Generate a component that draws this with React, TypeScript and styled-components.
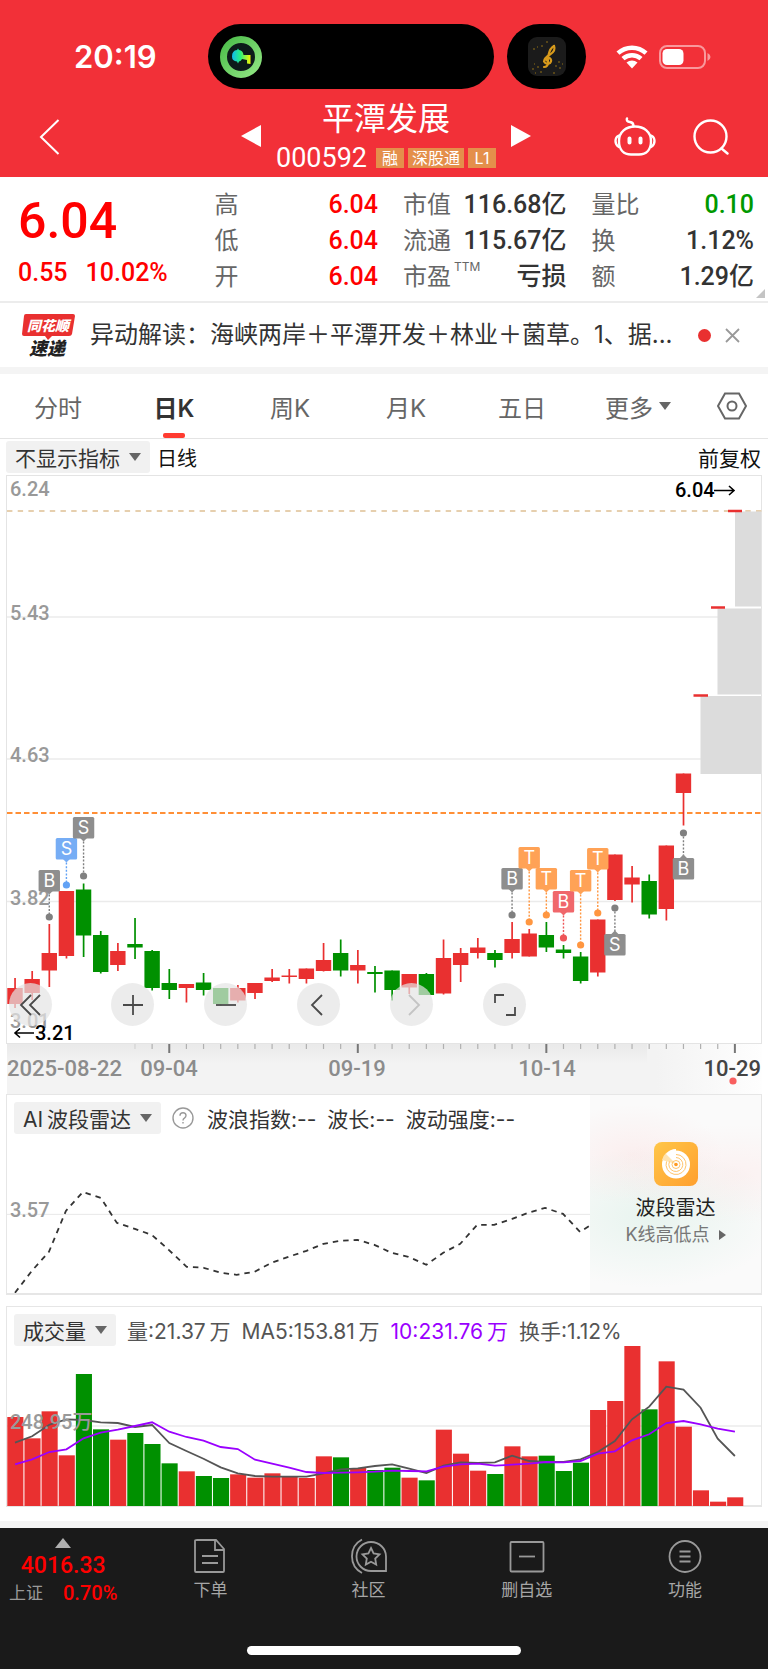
import React from 'react';
import styled, { createGlobalStyle } from 'styled-components';

const RED = '#e93030';
const GREEN = '#009000';
const SANS = 'Inter, "Noto Sans CJK SC", sans-serif';
const NUM = 'Roboto, "Noto Sans CJK SC", sans-serif';

const GlobalStyle = createGlobalStyle`
  * { box-sizing: border-box; }
  body { margin: 0; background: #fff; font-family: ${SANS}; color: #333; }
  button { border: 0; padding: 0; margin: 0; background: none; font: inherit; color: inherit; cursor: pointer; }
  a { color: inherit; text-decoration: none; }
  svg { display: block; }
`;

const Page = styled.div`
  display: flex;
  flex-direction: column;
  min-height: 100vh;
`;

/* ---------- header ---------- */
const Header = styled.header`
  background: #f23038;
  color: #fff;
  height: 177px;
  display: flex;
  flex-direction: column;
`;
const StatusBar = styled.div`
  display: grid;
  grid-template-columns: 208px 286px 79px 1fr;
  padding-top: 24px;
  align-items: center;
`;
const Clock = styled.time`
  font-size: 31px;
  font-weight: 600;
  line-height: 65px;
  padding-left: 74px;
`;
const Pill = styled.div<{ $center?: boolean }>`
  height: 65px;
  border-radius: 33px;
  background: #000;
  display: flex;
  align-items: center;
  justify-content: ${p => (p.$center ? 'center' : 'flex-start')};
  padding-left: ${p => (p.$center ? 0 : 12)}px;
  margin-left: ${p => (p.$center ? 13 : 0)}px;
  margin-right: ${p => (p.$center ? -13 : 0)}px;
`;
const Signals = styled.div`
  display: flex;
  align-items: center;
  gap: 11px;
  padding-left: 43px;
`;
const TitleBar = styled.div`
  flex: 1;
  display: grid;
  grid-template-columns: 1fr 290px 1fr;
  align-items: center;
  padding-left: 4px;
`;
const TitleSide = styled.div<{ $end?: boolean }>`
  display: flex;
  align-items: center;
  gap: 37px;
  justify-content: ${p => (p.$end ? 'flex-end' : 'flex-start')};
  padding: 7px 39px 0 35px;
`;
const TitleCenter = styled.div`
  display: flex;
  align-items: center;
  justify-content: space-between;
`;
const StepButton = styled.button`
  padding-top: 5px;
`;
const TitleText = styled.div`
  display: flex;
  flex-direction: column;
  align-items: center;
  padding-top: 6px;
`;
const StockName = styled.h1`
  margin: 0;
  font-size: 32px;
  font-weight: 400;
  line-height: 44px;
`;
const CodeLine = styled.div`
  display: flex;
  align-items: center;
  gap: 4px;
`;
const Code = styled.span`
  font-family: ${NUM};
  font-size: 27px;
  line-height: 34px;
  margin-right: 5px;
`;
const Tag = styled.span`
  background: #e48f4b;
  font-size: 16px;
  line-height: 20px;
  height: 20px;
  min-width: 28px;
  padding: 0 4px;
  text-align: center;
`;

/* ---------- quote ---------- */
const Quote = styled.section`
  display: grid;
  grid-template-columns: 171fr 163fr 163fr 162fr;
  column-gap: 25px;
  padding: 10px 14px 7px 18px;
  border-bottom: 2px solid #ececec;
  position: relative;
  height: 126px;
`;
const PriceBlock = styled.div`
  color: #ff0000;
  font-family: ${NUM};
  font-weight: 500;
`;
const Price = styled.div`
  font-size: 50px;
  line-height: 68px;
`;
const Change = styled.div`
  display: flex;
  gap: 18px;
  font-size: 25px;
  line-height: 36px;
`;
const Facts = styled.dl`
  margin: 0;
`;
const Fact = styled.div`
  display: flex;
  justify-content: space-between;
  height: 36px;
  line-height: 36px;
`;
const FactName = styled.dt`
  font-size: 24px;
  color: #666;
  display: flex;
`;
const FactValue = styled.dd<{ $color?: string }>`
  margin: 0;
  font-family: ${NUM};
  font-size: 25px;
  font-weight: 500;
  color: ${p => p.$color || '#333'};
`;
const Sup = styled.span`
  font-size: 12px;
  line-height: 14px;
  padding: 1px 0 0 3px;
`;
const Corner = styled.span`
  position: absolute;
  right: 3px;
  bottom: 3px;
  border-left: 9px solid transparent;
  border-bottom: 9px solid #c4c4c4;
`;

/* ---------- news ---------- */
const News = styled.section`
  display: flex;
  align-items: center;
  height: 64px;
  padding: 0 28px 0 22px;
`;
const NewsLogo = styled.svg`
  flex: none;
  overflow: visible;
`;
const NewsLink = styled.a`
  flex: 1;
  min-width: 0;
  margin-left: 15px;
  font-size: 24px;
  line-height: 36px;
  color: #333;
  white-space: nowrap;
`;
const RedDot = styled.span`
  width: 13px;
  height: 13px;
  border-radius: 50%;
  background: ${RED};
  margin: 0 14px 0 16px;
`;
const Band = styled.div`
  height: 7px;
  background: #f4f4f4;
`;

/* ---------- tabs ---------- */
const Tabs = styled.nav`
  display: flex;
  height: 65px;
  border-bottom: 1px solid #e4e4e4;
`;
const Tab = styled.button<{ $on?: boolean; $small?: boolean }>`
  flex: ${p => (p.$small ? 72 : 116)} 1 0;
  display: flex;
  align-items: center;
  justify-content: center;
  gap: 6px;
  font-size: 24px;
  font-weight: ${p => (p.$on ? 600 : 400)};
  color: ${p => (p.$on ? '#333' : '#666')};
  position: relative;
`;
const TabMark = styled.span`
  position: absolute;
  bottom: 0;
  left: calc(50% - 11px);
  width: 22px;
  height: 5px;
  border-radius: 2px;
  background: #ff3b30;
`;
const Triangle = styled.span`
  border: 6px solid transparent;
  border-top: 8px solid #666;
  border-bottom: 0;
`;

/* ---------- chart panels ---------- */
const Toolbar = styled.div`
  display: flex;
  align-items: center;
  height: 36px;
  padding: 0 7px 0 6px;
  font-size: 21px;
  color: #111;
`;
const Picker = styled.button`
  display: flex;
  align-items: center;
  gap: 9px;
  height: 32px;
  padding: 0 9px;
  border-radius: 3px;
  background: #f1f1f1;
  color: #333;
  font-size: 21px;
  white-space: nowrap;
`;
const LineKind = styled.span`
  flex: 1;
  padding-left: 7px;
  font-size: 20px;
`;
const ChartBox = styled.section`
  position: relative;
  margin: 0 6px;
`;
const ChartSvg = styled.svg`
  width: 100%;
  height: auto;
  overflow: visible;
`;
const Controls = styled.div`
  position: absolute;
  left: 3px;
  top: 508px;
  display: flex;
  gap: 50px;
`;
const RoundButton = styled.button<{ $faded?: boolean }>`
  width: 43px;
  height: 43px;
  border-radius: 50%;
  background: rgba(228, 228, 228, 0.7);
  color: ${p => (p.$faded ? '#c4c4c4' : '#4a4a4a')};
  display: flex;
  align-items: center;
  justify-content: center;
  &:first-child {
    margin-right: 9px;
  }
`;
const Panel = styled.section<{ $gap?: boolean }>`
  margin: 0 6px;
  margin-top: ${p => (p.$gap ? 11 : 0)}px;
  border: 1px solid #e6e6e6;
  border-width: 1px 1px 2px;
  height: 201px;
  display: flex;
`;
const PanelMain = styled.div`
  flex: 1;
  min-width: 0;
`;
const PanelClip = styled(PanelMain)`
  overflow: hidden;
`;
const PanelHead = styled.div`
  display: flex;
  align-items: center;
  height: 46px;
  padding-left: 7px;
  gap: 11px;
  font-size: 21px;
  color: #333;
  white-space: nowrap;
`;
const Help = styled.svg`
  margin-right: 2px;
`;
const Stat = styled.span<{ $color?: string }>`
  color: ${p => p.$color || '#555'};
`;
const Promo = styled.a`
  width: 171px;
  display: flex;
  flex-direction: column;
  align-items: center;
  padding-top: 47px;
  background:
    radial-gradient(ellipse 90px 50px at 25% 30%, rgba(255, 205, 205, 0.25), transparent),
    radial-gradient(ellipse 120px 50px at 85% 40%, rgba(255, 215, 215, 0.25), transparent),
    radial-gradient(ellipse 130px 70px at 35% 62%, rgba(205, 235, 222, 0.4), transparent),
    #fafafa;
`;
const PromoTitle = styled.span`
  font-size: 20px;
  line-height: 28px;
  margin-top: 8px;
  color: #222;
`;
const PromoSub = styled.span`
  display: flex;
  align-items: center;
  gap: 9px;
  font-size: 18px;
  line-height: 26px;
  color: #777;
`;
const RightTriangle = styled.span`
  border: 5px solid transparent;
  border-left: 7px solid #666;
  border-right: 0;
`;

/* ---------- bottom bar ---------- */
const Footer = styled.footer`
  flex: 1;
  margin-top: 14px;
  border-top: 7px solid #f4f4f4;
  background: #1a1a1a;
  display: flex;
  flex-direction: column;
  justify-content: space-between;
  align-items: center;
  padding-bottom: 14px;
`;
const FootRow = styled.nav`
  display: flex;
  align-self: stretch;
  padding: 10px 4px 0 0;
`;
const IndexBox = styled.button`
  flex: 127 1 0;
  display: flex;
  flex-direction: column;
  align-items: center;
  padding-right: 5px;
  font-family: ${NUM};
  font-weight: 500;
  color: #ff0000;
`;
const IndexValue = styled.span`
  font-size: 23px;
  line-height: 24px;
  margin-top: 6px;
`;
const IndexLine = styled.span`
  display: flex;
  gap: 20px;
  font-size: 20px;
  line-height: 30px;
`;
const IndexName = styled.span`
  font-size: 17px;
  font-weight: 400;
  color: #999;
`;
const FootItem = styled.button`
  flex: 159 1 0;
  display: flex;
  flex-direction: column;
  align-items: center;
  gap: 3px;
  font-size: 17px;
  line-height: 26px;
  color: #a6a6a6;
`;
const HomeBar = styled.div`
  width: 274px;
  height: 9px;
  border-radius: 5px;
  background: #fff;
`;

/* ---------- data ---------- */
const cx = (i: number) => 15 + 17.14 * i;

/* body top, body bottom, wick top, wick bottom */
type Candle = ['R' | 'G', number, number, number, number];
const candles: Candle[] = [
  ['R', 988, 1004, 978, 1008], ['R', 979, 993, 971, 1000], ['R', 953, 970.5, 924, 987], ['R', 891, 956, 891, 958.5],
  ['G', 889.5, 935.5, 883.5, 957], ['G', 935, 972, 931, 973.5], ['R', 951, 965, 943, 971], ['G', 944, 947.5, 918, 959],
  ['G', 951, 988, 950, 990.5], ['G', 983, 990, 969, 999], ['R', 984, 988, 984, 1002.5], ['G', 982.5, 990, 973, 995.5],
  ['G', 988, 1004, 988, 1006], ['R', 988, 1000.5, 985, 1002.5], ['R', 983, 993, 983, 999], ['R', 977.5, 981, 969, 982],
  ['R', 975.5, 977, 969, 983.5], ['R', 968.5, 979, 968.5, 983.5], ['R', 960, 971, 943, 971.5], ['G', 953, 970.5, 939.5, 976.5],
  ['R', 965, 970.5, 950, 983.5], ['G', 972, 974, 966, 992.5], ['G', 970.5, 990, 970.5, 1000.5], ['R', 974, 987.5, 974, 994],
  ['G', 974, 995, 973, 995], ['R', 958, 993.5, 939.5, 994.5], ['R', 953, 965, 948, 982], ['R', 947.5, 953, 938, 958.5],
  ['G', 953, 960, 950, 967.5], ['R', 939, 953, 922, 958.5], ['R', 933.5, 956.5, 929, 956.5], ['G', 935, 947.5, 922, 952],
  ['G', 949.5, 953, 945, 958.5], ['G', 956.5, 981, 952, 983.5], ['R', 919.5, 972.5, 919.5, 976.5], ['R', 854.5, 900, 854.5, 901],
  ['R', 877.5, 884.5, 866, 902.5], ['G', 881, 914.5, 874.5, 918.5], ['R', 845.5, 909, 845.5, 920.5], ['R', 773.5, 793, 773.5, 825.5],
];

/* candle index, letter, colour, box top, dot y */
type Marker = [number, string, string, number, number];
const markers: Marker[] = [
  [2, 'B', '#8e8e8e', 870, 917], [3, 'S', '#76adf5', 838, 885], [4, 'S', '#8e8e8e', 817, 876],
  [29, 'B', '#8e8e8e', 868, 915], [30, 'T', '#ffa256', 847, 922], [31, 'T', '#ffa256', 868, 915],
  [32, 'B', '#f0676b', 891, 938], [33, 'T', '#ffa256', 870, 945], [34, 'T', '#ffa256', 848, 913],
  [35, 'S', '#8e8e8e', 934, 908], [39, 'B', '#8e8e8e', 858, 833],
];
const dotColor: Record<string, string> = {
  '#8e8e8e': '#808080', '#76adf5': '#62a2f5', '#ffa256': '#ff9640', '#f0676b': '#ee5558',
};

const barKinds = 'RRRRGGRGGGRGGRRRRRRGRGGRGRRRGRRGGGRRRGRRRRR';
const barTops = [
  351, 415, 334, 466, 222, 388, 419, 399, 432, 490, 514, 528, 534, 523, 533, 520, 531, 534, 469, 472, 504, 510, 503, 533,
  541, 389, 461, 512, 522, 439, 469, 467, 513, 488, 330, 303, 138, 328, 184, 380, 571, 605, 592,
];
const ma5 = [
  428, 409, 374, 358, 360, 367, 369, 381, 375, 429, 453, 476, 502, 520, 528, 530, 530, 530, 520, 508, 505, 498, 493, 506,
  519, 497, 487, 489, 487, 467, 483, 486, 486, 478, 456, 423, 358, 320, 260, 269, 323, 416, 468,
];
const ma10 = [
  493, 478, 456, 448, 415, 398, 389, 378, 367, 395, 411, 422, 441, 447, 479, 491, 503, 516, 519, 518, 517, 515, 512, 513,
  514, 500, 493, 491, 497, 494, 491, 486, 487, 483, 461, 454, 421, 403, 369, 363, 373, 386, 395,
];
const line = (v: number[]) => v.map((y, i) => `${cx(i).toFixed(1)},${(y / 3).toFixed(1)}`).join(' ');

const wave =
  '15,213 32,191 49,172 66,131 83,112 101,118 117,143 135,149 152,155 169,170 187,187 204,188 221,193 237,195 255,192 272,183 289,177 307,171 324,164 341,161 358,160 375,165 392,173 409,177 427,185 444,173 461,164 478,145 495,145 513,139 529,133 546,128 564,134 581,152 598,141';

/* ---------- drawings ---------- */
const Axis = ({ y, children, x = 10 }: { y: number; children: React.ReactNode; x?: number }) => (
  <text x={x} y={y} fontFamily={NUM} fontSize="20" fontWeight="500" fill="#999">{children}</text>
);

const KChart = () => (
  <ChartSvg viewBox="6 475 756 619" role="img" aria-label="日K">
    <defs>
      <linearGradient id="axisfade" x1="0" x2="1" y1="0" y2="0">
        <stop offset="0.86" stopColor="#f3f3f3" />
        <stop offset="1" stopColor="#fefefe" />
      </linearGradient>
      <linearGradient id="axisshade" x1="0" x2="0" y1="0" y2="1">
        <stop offset="0" stopColor="#000" stopOpacity="0.04" />
        <stop offset="1" stopColor="#000" stopOpacity="0" />
      </linearGradient>
    </defs>
    {[617, 759, 901.5].map(y => <line key={y} x1="6" x2="762" y1={y} y2={y} stroke="#ebebeb" strokeWidth="1.5" />)}
    <rect x="6.5" y="475.5" width="755" height="568" fill="none" stroke="#e4e4e4" />
    <path d="M7 511H762" stroke="#e6cfae" strokeWidth="2" strokeDasharray="5.4 5.3" />
    <path d="M7 813H762" stroke="#ff8f36" strokeWidth="2" strokeDasharray="5.5 3" />
    <g fill="#dcdcdc">
      <rect x="735" y="511.5" width="26" height="95" />
      <rect x="717.5" y="608.5" width="43.5" height="86" />
      <rect x="700.5" y="696" width="60.5" height="78" />
    </g>
    <g stroke={RED} strokeWidth="2.4">
      <path d="M728 511H742M711 607.5H725M693.5 695.5H708" />
    </g>
    <Axis y={496}>6.24</Axis>
    <Axis y={620}>5.43</Axis>
    <Axis y={762}>4.63</Axis>
    <Axis y={905}>3.82</Axis>
    <Axis y={1028}>3.01</Axis>
    {candles.map(([k, t, b, h, l], i) => (
      <g key={i} fill={k === 'R' ? RED : GREEN}>
        <rect x={cx(i) - 0.8} y={h} width="1.7" height={l - h} />
        <rect x={Math.max(7, cx(i) - 7.7)} y={t} width="15.4" height={b - t} />
      </g>
    ))}
    {markers.map(([i, ch, c, top, dot]) => {
      const below = dot < top;
      const x = cx(i);
      return (
        <g key={i} fill={c}>
          <path d={below ? `M${x} ${dot}V${top}` : `M${x} ${top + 21}V${dot}`} stroke={dotColor[c]} strokeWidth="1.4" strokeDasharray="2 1.6" />
          <circle cx={x} cy={dot} r="3.6" fill={dotColor[c]} />
          <rect x={x - 10.7} y={top} width="21.4" height="21.4" rx="1.5" />
          <path d={below ? `M${x - 3.5} ${top}l3.5 -3.5l3.5 3.5z` : `M${x - 3.5} ${top + 21}l3.5 3.5l3.5 -3.5z`} />
          <text x={x} y={top + 17} fill="#fff" textAnchor="middle" fontFamily={SANS} fontSize="18">{ch}</text>
        </g>
      );
    })}
    <g fill="#000" fontFamily={NUM} fontSize="20" fontWeight="500">
      <text x="675" y="497">6.04</text>
      <text x="35" y="1040">3.21</text>
    </g>
    <path d="M714 490.5H734M729 486l5 4.5l-5 4.5M34 1033H15M20 1028.5l-5 4.5l5 4.5" fill="none" stroke="#000" strokeWidth="1.6" />
    <rect x="7" y="1044" width="755" height="50" fill="url(#axisfade)" />
    <rect x="7" y="1044" width="640" height="20" fill="url(#axisshade)" />
    {Array.from({ length: 36 }, (_, k) => k + 7).map(i => {
      const major = (i - 9) % 11 === 0;
      return (
        <path key={i} d={`M${cx(i)} 1044v${major ? 9 : 5}`} stroke={major ? '#777' : '#b0b0b0'} strokeOpacity={i === 7 ? 0.4 : 1} strokeWidth={major ? 2 : 1.2} />
      );
    })}
    <g fontFamily={NUM} fontSize="22" fontWeight="500" fill="#8c8c8c">
      <text x="7" y="1076">2025-08-22</text>
      <text x="169" y="1076" textAnchor="middle">09-04</text>
      <text x="357" y="1076" textAnchor="middle">09-19</text>
      <text x="547" y="1076" textAnchor="middle">10-14</text>
      <text x="761" y="1076" textAnchor="end" fill="#444">10-29</text>
    </g>
    <circle cx="733" cy="1081" r="3.6" fill="#f95f5f" />
  </ChartSvg>
);

const VolumeChart = () => (
  <ChartSvg viewBox="7 53 754 153" role="img" aria-label="成交量">
    <line x1="7" x2="761" y1="126" y2="126" stroke="#ebebeb" strokeWidth="1.5" />
    {barTops.map((t, i) => (
      <rect key={i} x={cx(i) - 7.7} y={t / 3} width="16.1" height={206 - t / 3} fill={barKinds[i] === 'R' ? RED : GREEN} />
    ))}
    <polyline points={line(ma5)} fill="none" stroke="#555" strokeWidth="1.8" />
    <polyline points={line(ma10)} fill="none" stroke="#9a00ff" strokeWidth="1.8" />
    <Axis y={129}>248.95万</Axis>
  </ChartSvg>
);

const WaveChart = () => (
  <ChartSvg viewBox="7 61 584 153" role="img" aria-label="AI波段雷达">
    <line x1="7" x2="591" y1="134.5" y2="134.5" stroke="#e8e8e8" />
    <polyline points={wave} fill="none" stroke="#333" strokeWidth="1.8" strokeDasharray="5.5 5" />
    <Axis y={137}>3.57</Axis>
  </ChartSvg>
);

const Glyph = ({ d }: { d: string }) => (
  <svg width="24" height="24" viewBox="0 0 24 24" fill="none" stroke="currentColor" strokeWidth="1.8"><path d={d} /></svg>
);
const controls: [string, string, boolean?][] = [
  ['最前', 'M12 2L2 12l10 10M21 2L11 12l10 10'],
  ['放大', 'M12 2v20M2 12h20'],
  ['缩小', 'M2 12h20'],
  ['向左', 'M15 2L5 12l10 10'],
  ['向右', 'M9 2l10 10l-10 10', true],
  ['全屏', 'M2 10V2h9M22 14v8h-9'],
];

export default function App() {
  return (
    <Page>
      <GlobalStyle />
      <Header>
        <StatusBar>
          <Clock>20:19</Clock>
          <Pill>
            <svg width="42" height="42" viewBox="0 0 42 42">
              <defs>
                <linearGradient id="ring" x1="0" x2="1" y1="0" y2="1"><stop offset="0" stopColor="#4cbc4a" /><stop offset="1" stopColor="#90e682" /></linearGradient>
                <linearGradient id="talk" x1="0" x2="1"><stop offset="0" stopColor="#10b8f0" /><stop offset=".45" stopColor="#28f080" /><stop offset="1" stopColor="#f8f400" /></linearGradient>
              </defs>
              <circle cx="21" cy="21" r="17.5" fill="#0d1a1a" stroke="url(#ring)" strokeWidth="7" />
              <path d="M12 20.500q0-6 5-6.500l1-1.500l1 1.500q4 .5 4.500 5h7v9l-3.500-.5v-3.500l-5-1q-1 2-3 2.500l-1 2l-1-2q-5-.5-5-5z" fill="url(#talk)" />
            </svg>
          </Pill>
          <Pill $center>
            <svg width="38" height="39" viewBox="0 0 38 39">
              <rect width="38" height="39" rx="9" fill="#1b1b1b" />
              <g fill="none" stroke="#d79a1c" strokeLinecap="round">
                <path d="M26 9q-4 2-5.500 9q-1 4-.5 7q0 5-4 5" strokeWidth="2.2" />
                <path d="M26 9q2 5-4 8.500q-6 3.500-6 7q2 3.500 6 1.500q2.500-3-.5-5q-3 0-3 2.500" strokeWidth="2.2" />
              </g>
              <path d="M4 32h2M7 36h1M9 30h2M12 35h2M25 36h2M31 31h2M6 27h1M30 25h2M34 27h1M27 29h2M13 9h2M5 12h2M18 5h2M9 10h1" stroke="#6b5418" strokeWidth="1.5" />
            </svg>
          </Pill>
          <Signals>
            <svg width="32" height="24" viewBox="0 0 32 24" fill="#fff">
              <path d="M16 .5Q25 .5 31.500 6.500L28.500 9.800Q23 5 16 5Q9 5 3.500 9.800L.5 6.500Q7 .5 16 .5z" />
              <path d="M16 8Q22 8 26.500 12L23.500 15.300Q20 12.400 16 12.400Q12 12.400 8.500 15.300L5.500 12Q10 8 16 8z" />
              <path d="M16 15.500Q19 15.500 21.500 17.500L16 23.500L10.500 17.500Q13 15.500 16 15.500z" />
            </svg>
            <svg width="52" height="24" viewBox="0 0 52 24">
              <rect x="1" y="1" width="45" height="22" rx="7" fill="none" stroke="#fff" strokeOpacity=".5" strokeWidth="2" />
              <rect x="3.5" y="4" width="21" height="16" rx="4.5" fill="#fff" />
              <path d="M48.500 8v8q3-1.500 3-4t-3-4z" fill="#fff" fillOpacity=".5" />
            </svg>
          </Signals>
        </StatusBar>
        <TitleBar>
          <TitleSide>
            <button aria-label="返回">
              <svg width="21" height="36" viewBox="0 0 21 36" fill="none" stroke="#fff" strokeWidth="2"><path d="M19.500 1L2 18l17.500 17" /></svg>
            </button>
          </TitleSide>
          <TitleCenter>
            <StepButton aria-label="上一只"><svg width="20" height="22" viewBox="0 0 20 22"><path d="M20 0v22L0 11z" fill="#fff" /></svg></StepButton>
            <TitleText>
              <StockName>平潭发展</StockName>
              <CodeLine><Code>000592</Code><Tag>融</Tag><Tag>深股通</Tag><Tag>L1</Tag></CodeLine>
            </TitleText>
            <StepButton aria-label="下一只"><svg width="20" height="22" viewBox="0 0 20 22"><path d="M0 0v22l20-11z" fill="#fff" /></svg></StepButton>
          </TitleCenter>
          <TitleSide $end>
            <button aria-label="助手">
              <svg width="42" height="39" viewBox="0 0 42 39" fill="none" stroke="#fff" strokeWidth="2.4" strokeLinecap="round">
                <path d="M13 1.500q-1 3 3 3.500q3.500 .5 3.500 4" />
                <path d="M21 9.500C30 9.500 37 15 37 24C37 33 32 37.500 25 37.500H17C10 37.500 5 33 5 24C5 15 12 9.500 21 9.500z" />
                <path d="M5 18.500q-3.500 1.500-3.500 5.500t3.500 6M37 18.500q3.500 1.500 3.500 5.500t-3.500 6" />
                <path d="M15.500 21.500v4M26.500 21.500v4" strokeWidth="4" />
              </svg>
            </button>
            <button aria-label="搜索">
              <svg width="36" height="36" viewBox="0 0 36 36" fill="none" stroke="#fff" strokeWidth="2.4" strokeLinecap="round"><circle cx="17.5" cy="17.5" r="16" /><path d="M28.500 29.500l6 5" /></svg>
            </button>
          </TitleSide>
        </TitleBar>
      </Header>

      <Quote>
        <PriceBlock>
          <Price>6.04</Price>
          <Change><span>0.55</span><span>10.02%</span></Change>
        </PriceBlock>
        <Facts>
          <Fact><FactName>高</FactName><FactValue $color="#ff0000">6.04</FactValue></Fact>
          <Fact><FactName>低</FactName><FactValue $color="#ff0000">6.04</FactValue></Fact>
          <Fact><FactName>开</FactName><FactValue $color="#ff0000">6.04</FactValue></Fact>
        </Facts>
        <Facts>
          <Fact><FactName>市值</FactName><FactValue>116.68亿</FactValue></Fact>
          <Fact><FactName>流通</FactName><FactValue>115.67亿</FactValue></Fact>
          <Fact><FactName>市盈<Sup>TTM</Sup></FactName><FactValue>亏损</FactValue></Fact>
        </Facts>
        <Facts>
          <Fact><FactName>量比</FactName><FactValue $color="#009900">0.10</FactValue></Fact>
          <Fact><FactName>换</FactName><FactValue>1.12%</FactValue></Fact>
          <Fact><FactName>额</FactName><FactValue>1.29亿</FactValue></Fact>
        </Facts>
        <Corner />
      </Quote>

      <News>
        <NewsLogo width="53" height="45" viewBox="0 0 53 45" fontFamily={SANS} fontWeight="900" fontStyle="italic" textAnchor="middle">
          <path d="M4 1H51q2 0 2 2l-3 18q-.5 2-3 2H30l-4 4l-3-4H2q-2 0-2-2L2 3q0-2 2-2z" fill={RED} />
          <text x="26" y="18" fontSize="14" fill="#fff">同花顺</text>
          <text x="25" y="42" fontSize="18" fill="#222">速递</text>
        </NewsLogo>
        <NewsLink href="#news">异动解读：海峡两岸＋平潭开发＋林业＋菌草。1、据...</NewsLink>
        <RedDot />
        <button aria-label="关闭">
          <svg width="15" height="15" viewBox="0 0 15 15" stroke="#999" strokeWidth="1.8"><path d="M1 1l13 13M14 1L1 14" /></svg>
        </button>
      </News>
      <Band />

      <Tabs>
        <Tab>分时</Tab>
        <Tab $on>日K<TabMark /></Tab>
        <Tab>周K</Tab>
        <Tab>月K</Tab>
        <Tab>五日</Tab>
        <Tab>更多<Triangle /></Tab>
        <Tab $small aria-label="设置">
          <svg width="30" height="28" viewBox="0 0 30 28" fill="none" stroke="#666" strokeWidth="2"><path d="M8 1.500H22L29 14L22 26.500H8L1 14z" /><circle cx="15" cy="14" r="4.5" /></svg>
        </Tab>
      </Tabs>

      <Toolbar>
        <Picker>不显示指标<Triangle /></Picker>
        <LineKind>日线</LineKind>
        <span>前复权</span>
      </Toolbar>
      <ChartBox>
        <KChart />
        <Controls>
          {controls.map(([label, d, faded]) => (
            <RoundButton key={label} aria-label={label} $faded={faded}><Glyph d={d} /></RoundButton>
          ))}
        </Controls>
      </ChartBox>

      <Panel>
        <PanelClip>
          <PanelHead>
            <Picker>AI&thinsp;波段雷达<Triangle /></Picker>
            <Help width="22" height="22" viewBox="0 0 22 22" fill="none" stroke="#999" strokeWidth="1.4">
              <circle cx="11" cy="11" r="10" />
              <path d="M8 8.700q0-3 3-3t3 2.800q0 1.500-1.600 2.600Q11 12 11 13.500M11 15v1.600" />
            </Help>
            <span>波浪指数:--</span>
            <span>波长:--</span>
            <span>波动强度:--</span>
          </PanelHead>
          <WaveChart />
        </PanelClip>
        <Promo href="#radar">
          <svg width="44" height="44" viewBox="0 0 44 44">
            <defs><linearGradient id="amber" x1="0" x2="1" y1="0" y2="1"><stop offset="0" stopColor="#ffc648" /><stop offset="1" stopColor="#ff9f2e" /></linearGradient></defs>
            <rect width="44" height="44" rx="8" fill="url(#amber)" />
            <circle cx="22" cy="22.5" r="14" fill="#fff" />
            <path d="M22 22L8 18q2-9 14-11z" fill="#ffe3b0" />
            <path d="M22 22V7q-6 0-10 5z" fill="#fff" />
            <g fill="none" stroke="#ffc46a"><path d="M22 12.500a10 10 0 1 1-9.500 7" /><path d="M22 15.500a7 7 0 1 1-6.500 4" /><circle cx="22" cy="22.5" r="4" /></g>
            <circle cx="22" cy="22.5" r="1.8" fill="#ff9a20" />
          </svg>
          <PromoTitle>波段雷达</PromoTitle>
          <PromoSub>K线高低点<RightTriangle /></PromoSub>
        </Promo>
      </Panel>

      <Panel $gap>
        <PanelMain>
          <PanelHead>
            <Picker>成交量<Triangle /></Picker>
            <Stat>量:21.37&thinsp;万</Stat>
            <Stat>MA5:153.81&thinsp;万</Stat>
            <Stat $color="#9a00ff">10:231.76&thinsp;万</Stat>
            <Stat>换手:1.12%</Stat>
          </PanelHead>
          <VolumeChart />
        </PanelMain>
      </Panel>

      <Footer>
        <FootRow>
          <IndexBox>
            <svg width="16" height="10" viewBox="0 0 16 10"><path d="M8 0l8 10H0z" fill="#b0b0b0" /></svg>
            <IndexValue>4016.33</IndexValue>
            <IndexLine><IndexName>上证</IndexName>0.70%</IndexLine>
          </IndexBox>
          <FootItem>
            <svg width="36" height="36" viewBox="0 0 36 36" fill="none" stroke="#999" strokeWidth="1.8">
              <path d="M5 2H24l8 9V33q0 1-1 1H4q-1 0-1-1V3q0-1 2-1zM23 2v10h9M10 18h16M10 25h16" />
            </svg>
            下单
          </FootItem>
          <FootItem>
            <svg width="36" height="36" viewBox="0 0 36 36" fill="none" stroke="#999" strokeWidth="1.8">
              <path d="M20 4a15 14.500 0 0 1 15 14.500V33H20A14.500 14.500 0 0 1 20 4z" />
              <path d="M11 1.500A19 19 0 0 0 11 35" />
              <path d="M20 10l2.600 5.500l5.900.8l-4.300 4.200l1 6L20 23.700l-5.200 2.800l1-6l-4.300-4.200l5.900-.8z" />
            </svg>
            社区
          </FootItem>
          <FootItem>
            <svg width="36" height="36" viewBox="0 0 36 36" fill="none" stroke="#999" strokeWidth="1.8">
              <rect x="1.5" y="4" width="33" height="29.5" rx="1" /><path d="M10 18.500h16" />
            </svg>
            删自选
          </FootItem>
          <FootItem>
            <svg width="36" height="36" viewBox="0 0 36 36" fill="none" stroke="#999" strokeWidth="1.8">
              <circle cx="18" cy="18.5" r="15.5" /><path d="M12.500 13.500h11M12.500 18.500h11M12.500 23.500h11" />
            </svg>
            功能
          </FootItem>
        </FootRow>
        <HomeBar />
      </Footer>
    </Page>
  );
}
